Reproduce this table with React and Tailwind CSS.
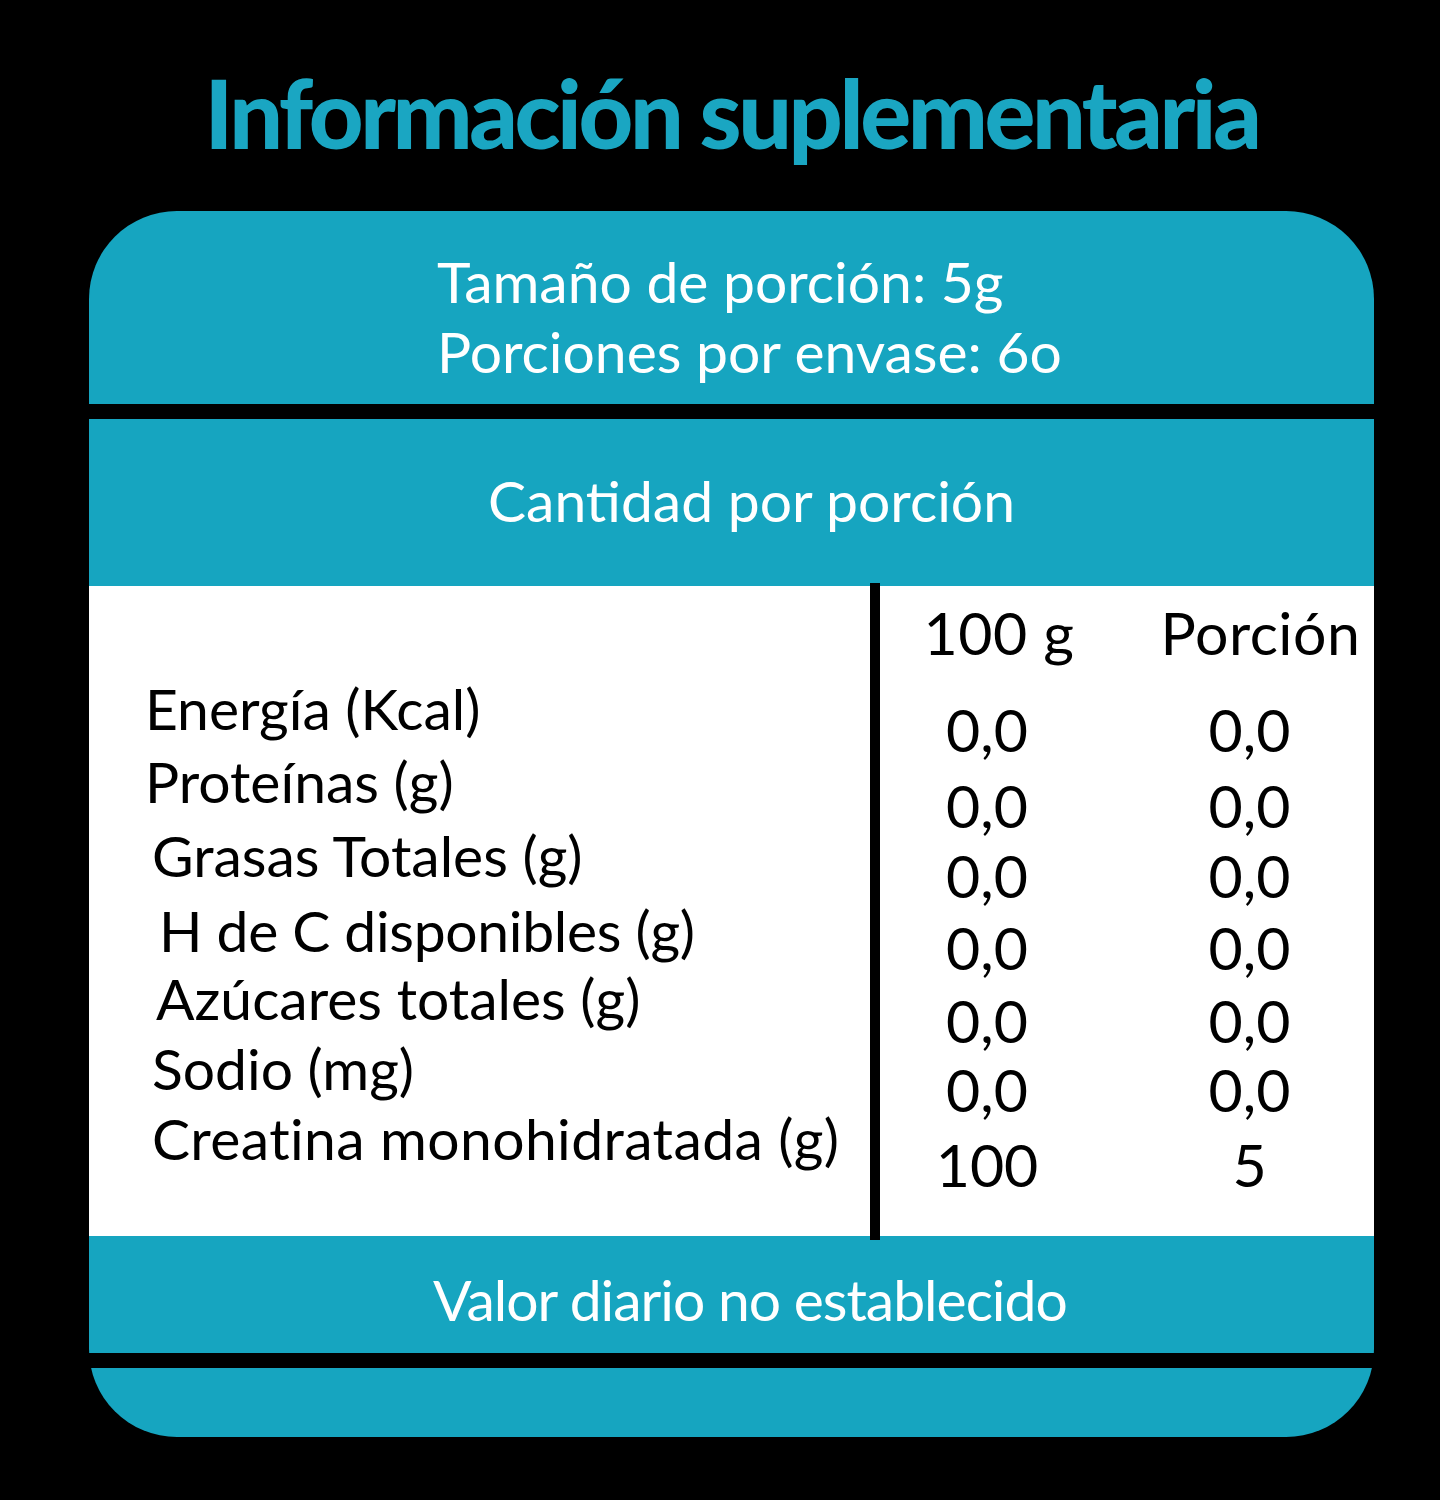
export default function App() {
  const labels = [
    { t: "Energía (Kcal)", c: "h-[73px] pl-[56px]" },
    { t: "Proteínas (g)", c: "h-[74px] pl-[56px]" },
    { t: "Grasas Totales (g)", c: "h-[75px] pl-[63px]" },
    { t: "H de C disponibles (g)", c: "h-[68px] pl-[70px] tracking-[-0.3px]" },
    { t: "Azúcares totales (g)", c: "h-[70px] pl-[67px]" },
    { t: "Sodio (mg)", c: "h-[70px] pl-[63px]" },
    { t: "Creatina monohidratada (g)", c: "h-[70px] pl-[63px] tracking-[0.4px]" },
  ];
  const values = [
    { a: "0,0", b: "0,0", c: "h-[76px]" },
    { a: "0,0", b: "0,0", c: "h-[70px]" },
    { a: "0,0", b: "0,0", c: "h-[72px]" },
    { a: "0,0", b: "0,0", c: "h-[73px]" },
    { a: "0,0", b: "0,0", c: "h-[69px]" },
    { a: "0,0", b: "0,0", c: "h-[75px]" },
    { a: "100", b: "5", c: "h-[70px]" },
  ];
  return (
    <div className="w-[1440px] h-[1500px] bg-black font-['Lato',_'Open_Sans',_sans-serif]">
      <div className="h-[211px] w-[1285px] ml-[89px] flex justify-center pt-[65px]">
        <div className="inline-block text-[95px] leading-none font-black tracking-[-3.4px] text-[#1aa6c2] whitespace-nowrap">
          Información suplementaria
        </div>
      </div>
      <div className="ml-[89px] w-[1285px] h-[1226px] rounded-[88px] overflow-hidden flex flex-col">
        <div className="h-[193px] shrink-0 bg-[#16a5c0] pt-[35px] pl-[348px] text-white text-[57px] leading-[70px] whitespace-nowrap">
          <div>Tamaño de porción: 5g</div>
          <div>Porciones por envase: 6o</div>
        </div>
        <div className="h-[15px] shrink-0" />
        <div className="h-[167px] shrink-0 bg-[#16a5c0] pt-[46px] pl-[399px] text-white text-[57px] leading-[70px] whitespace-nowrap">
          Cantidad por porción
        </div>
        <div className="h-[650px] shrink-0 bg-white flex text-black">
          <div className="w-[781px] shrink-0 pt-[87px] text-[57px] leading-[70px] whitespace-nowrap">
            {labels.map((l) => (
              <div key={l.t} className={l.c}>
                {l.t}
              </div>
            ))}
          </div>
          <div className="w-[10px] shrink-0 h-[657px] -mt-[3px] bg-black relative z-10" />
          <div className="flex-1 pt-[12px] text-[59px] leading-[70px] whitespace-nowrap">
            <div className="flex h-[97px]">
              <div className="w-[220px] text-center pl-[18px] tracking-[0.5px]">100 g</div>
              <div className="w-[25px]" />
              <div className="w-[249px] text-center pl-[22px] tracking-[0.5px]">Porción</div>
            </div>
            {values.map((v, i) => (
              <div key={i} className={"flex " + v.c}>
                <div className="w-[220px] text-center pr-[6px]">{v.a}</div>
                <div className="w-[25px]" />
                <div className="w-[249px] text-center">{v.b}</div>
              </div>
            ))}
          </div>
        </div>
        <div className="h-[117px] shrink-0 bg-[#16a5c0] pt-[28px] pl-[344px] text-white text-[57px] leading-[70px] whitespace-nowrap tracking-[-1px]">
          Valor diario no establecido
        </div>
        <div className="h-[15px] shrink-0" />
        <div className="h-[69px] shrink-0 bg-[#16a5c0]" />
      </div>
    </div>
  );
}
